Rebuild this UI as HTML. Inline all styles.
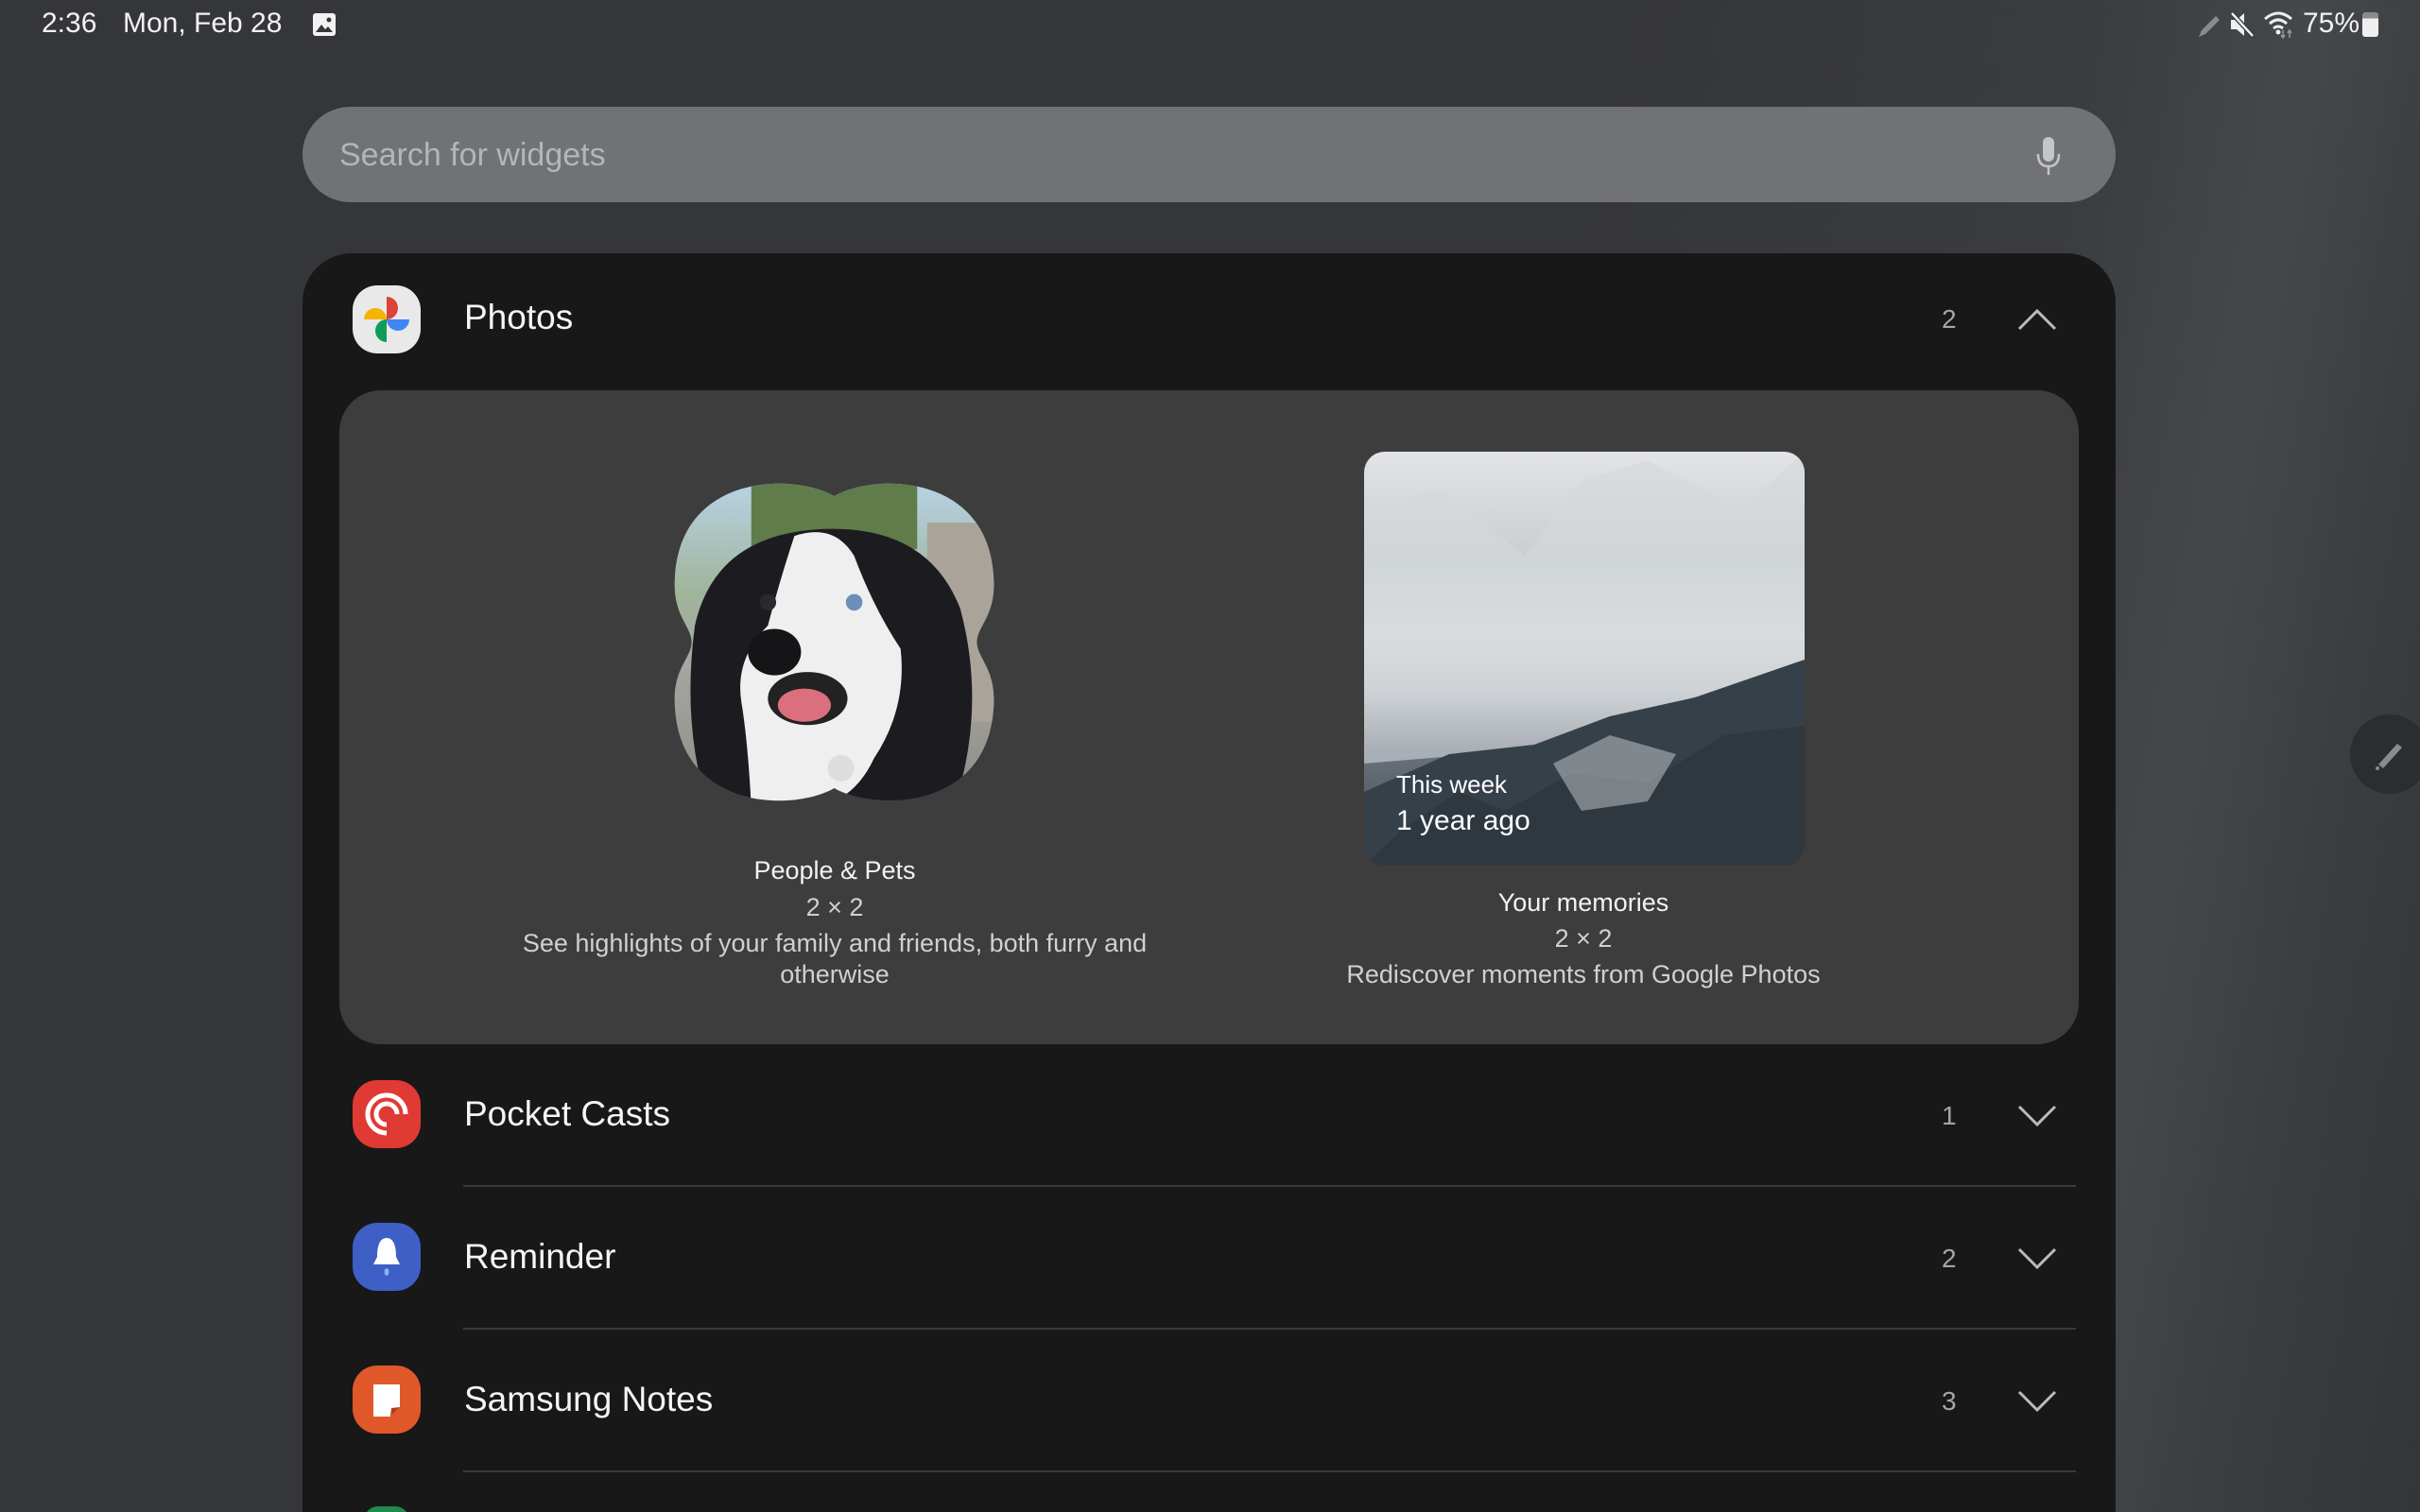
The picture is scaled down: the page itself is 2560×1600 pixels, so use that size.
<!DOCTYPE html>
<html style="width:2560px;height:1600px;overflow:hidden"><head><meta charset="utf-8"><style>
*{margin:0;padding:0;box-sizing:border-box}
html,body{width:2560px;height:1600px;overflow:hidden}
body{position:relative;font-family:"Liberation Sans",Roboto,sans-serif;
background:linear-gradient(100deg,#35363a 0%,#35363a 60%,#3a3c40 78%,#45484b 86%,#3a3c3f 93%,#333538 100%);}
.abs{position:absolute}
.st{top:8px;font-size:30px;color:#f2f2f2}
.search{left:320px;top:113px;width:1918px;height:101px;border-radius:51px;background:#717275}
.search span{position:absolute;left:39px;top:32px;font-size:34px;color:#b4b5b7}
.card{left:320px;top:268px;width:1918px;height:1400px;border-radius:52px;background:#181818}
.panel{left:359px;top:413px;width:1840px;height:692px;border-radius:44px;background:#3d3d3d}
.name{font-size:37px;color:#f5f5f5}
.cnt{font-size:28px;color:#a5a5a5}
.sep{left:490px;width:1706px;height:2px;background:#3a3a3a}
.lab{font-size:27px;color:#f2f2f2;text-align:center}
.sub{font-size:27px;color:#d0d0d0;text-align:center;line-height:33px}
</style></head><body>
<div class="abs st" style="left:44px">2:36</div>
<div class="abs st" style="left:130px">Mon, Feb 28</div>
<svg class="abs" style="left:329px;top:12px" width="28" height="28" viewBox="0 0 28 28"><rect x="2" y="2" width="24" height="24" rx="3" fill="#f2f2f2"/><path d="M5 22 L11 14 L15 19 L18 16 L23 22Z" fill="#35363a"/><circle cx="19" cy="9" r="2.5" fill="#35363a"/></svg>
<svg class="abs" style="left:2322px;top:12px" width="30" height="30" viewBox="0 0 30 30"><path d="M4 27 L7 20 L22 5 L26 9 L11 24Z" fill="#8a8b8d"/></svg>
<svg class="abs" style="left:2358px;top:10px" width="28" height="32" viewBox="0 0 28 32"><path d="M2 11 H8 L16 4 V28 L8 21 H2Z" fill="#eee"/><path d="M3 4 L25 28" stroke="#35363a" stroke-width="5"/><path d="M3 4 L25 28" stroke="#eee" stroke-width="2.5"/></svg>
<svg class="abs" style="left:2394px;top:10px" width="36" height="32" viewBox="0 0 36 32"><path d="M2 10 Q16 -2 30 10" stroke="#eee" stroke-width="3" fill="none"/><path d="M7 15 Q16 7 25 15" stroke="#eee" stroke-width="3" fill="none"/><path d="M11 20 Q16 16 21 20" stroke="#eee" stroke-width="3" fill="none"/><circle cx="16" cy="24" r="2.5" fill="#eee"/><path d="M21 22 V30 M19 27 L21 30 L23 27 M28 30 V22 M26 25 L28 22 L30 25" stroke="#999" stroke-width="1.5" fill="none"/></svg>
<div class="abs st" style="left:2436px">75%</div>
<div class="abs" style="left:2499px;top:13px;width:17px;height:26px;border-radius:3px;background:linear-gradient(#8a8a8a 0 25%,#eee 25%)"></div>

<div class="abs search"><span>Search for widgets</span>
<svg class="abs" style="left:1832px;top:30px" width="30" height="44" viewBox="0 0 30 44"><rect x="9" y="2" width="12" height="26" rx="6" fill="#c4c5c7"/><path d="M4 20 Q4 33 15 33 Q26 33 26 20" stroke="#c4c5c7" stroke-width="2.5" fill="none"/><path d="M15 33 V42" stroke="#c4c5c7" stroke-width="2.5"/></svg></div>

<div class="abs card"></div>
<svg class="abs" style="left:373px;top:302px" width="72" height="72" viewBox="0 0 72 72"><rect width="72" height="72" rx="26" fill="#e9e9e9"/>
<path d="M36 36 V12 A12 12 0 0 1 36 36Z" fill="#db4437"/>
<path d="M36 36 H60 A12 12 0 0 1 36 36Z" fill="#4285f4"/>
<path d="M36 36 V60 A12 12 0 0 1 36 36Z" fill="#0f9d58"/>
<path d="M36 36 H12 A12 12 0 0 1 36 36Z" fill="#f4b400"/></svg>
<div class="abs name" style="left:491px;top:315px">Photos</div>
<div class="abs cnt" style="left:2054px;top:322px">2</div>
<svg class="abs" style="left:2133px;top:325px" width="44" height="26" viewBox="0 0 44 26"><path d="M3 23 L22 4 L41 23" stroke="#bbb" stroke-width="3" fill="none"/></svg>

<div class="abs panel"></div>
<svg class="abs" style="left:707px;top:504px" width="351" height="351" viewBox="0 0 100 100">
<defs><clipPath id="cl"><path d="M50,6 C62,-1 96,-1 98,30 C99,42 93,45 93,50 C93,55 99,58 98,70 C96,101 62,101 50,94 C38,101 4,101 2,70 C1,58 7,55 7,50 C7,45 1,42 2,30 C4,-1 38,-1 50,6 Z"/></clipPath>
<linearGradient id="sky" x1="0" y1="0" x2="0" y2="1"><stop offset="0" stop-color="#b9d4ea"/><stop offset="0.35" stop-color="#9fb59a"/><stop offset="0.55" stop-color="#a8a8a2"/><stop offset="1" stop-color="#8b8a86"/></linearGradient></defs>
<g clip-path="url(#cl)">
<rect width="100" height="100" fill="url(#sky)"/>
<rect x="25" y="0" width="50" height="22" fill="#607c4a"/>
<rect x="78" y="14" width="22" height="60" fill="#a9a39a"/>
<path d="M8 45 Q14 18 45 16 Q78 14 88 40 Q96 70 86 100 H12 Q4 75 8 45Z" fill="#1c1c20"/>
<path d="M38 18 Q50 14 56 24 Q62 40 70 52 Q72 70 62 85 Q55 100 40 100 H25 Q24 80 22 68 Q20 55 30 45 Q34 30 38 18Z" fill="#efefef"/>
<ellipse cx="32" cy="53" rx="8" ry="7" fill="#151518"/>
<ellipse cx="42" cy="67" rx="12" ry="8" fill="#222"/>
<ellipse cx="41" cy="69" rx="8" ry="5" fill="#dc6f7d"/>
<circle cx="30" cy="38" r="2.5" fill="#2a2a2e"/><circle cx="56" cy="38" r="2.5" fill="#6c8fb8"/>
<circle cx="52" cy="88" r="4" fill="#ddd"/>
</g></svg>
<div class="abs lab" style="left:483px;top:906px;width:800px">People &amp; Pets</div>
<div class="abs sub" style="left:483px;top:944px;width:800px">2 × 2</div>
<div class="abs sub" style="left:483px;top:982px;width:800px">See highlights of your family and friends, both furry and<br>otherwise</div>

<div class="abs" style="left:1443px;top:478px;width:466px;height:438px;border-radius:22px;overflow:hidden;background:linear-gradient(180deg,#e2e4e6 0%,#c9ced2 25%,#dfe1e3 45%,#c4c8cc 58%,#6a737c 72%,#3e4750 100%)">
<svg class="abs" style="left:0;top:0" width="466" height="438" viewBox="0 0 466 438">
<path d="M0 60 L80 40 L170 110 L230 30 L300 10 L400 60 L466 0 V230 L380 260 L300 300 L200 330 L120 320 L0 330Z" fill="#d4d8dc" opacity=".6"/>
<path d="M0 360 L90 320 L180 310 L260 280 L350 260 L466 220 V438 H0Z" fill="#364049"/>
<path d="M40 400 L100 360 L150 380 L220 340 L300 350 L380 300 L466 290 V438 H0Z" fill="#2c343c" opacity=".7"/>
<path d="M200 330 L260 300 L330 320 L300 370 L230 380Z" fill="#c9cdd1" opacity=".5"/>
</svg>
<div class="abs" style="left:34px;top:337px;font-size:26px;color:#fff">This week</div>
<div class="abs" style="left:34px;top:374px;font-size:30px;color:#fff">1 year ago</div>
</div>
<div class="abs lab" style="left:1275px;top:940px;width:800px">Your memories</div>
<div class="abs sub" style="left:1275px;top:977px;width:800px">2 × 2</div>
<div class="abs sub" style="left:1275px;top:1015px;width:800px">Rediscover moments from Google Photos</div>

<svg class="abs" style="left:373px;top:1143px" width="72" height="72" viewBox="0 0 72 72"><rect width="72" height="72" rx="26" fill="#e03a35"/>
<path d="M36 56 A20 20 0 1 1 56 36" stroke="#fff" stroke-width="5" fill="none"/><path d="M36 47 A11 11 0 1 1 47 36" stroke="#fff" stroke-width="5" fill="none"/></svg>
<div class="abs name" style="left:491px;top:1158px">Pocket Casts</div>
<div class="abs cnt" style="left:2054px;top:1165px">1</div>
<svg class="abs" style="left:2133px;top:1168px" width="44" height="26" viewBox="0 0 44 26"><path d="M3 3 L22 22 L41 3" stroke="#bbb" stroke-width="3" fill="none"/></svg>
<div class="abs sep" style="top:1254px"></div>

<svg class="abs" style="left:373px;top:1294px" width="72" height="72" viewBox="0 0 72 72"><rect width="72" height="72" rx="26" fill="#3e5fc6"/>
<path d="M36 16 C44 16 46 26 46 36 L50 44 H22 L26 36 C26 26 28 16 36 16Z" fill="#fff"/><ellipse cx="36" cy="52" rx="2.5" ry="4" fill="#7fb6ee"/></svg>
<div class="abs name" style="left:491px;top:1309px">Reminder</div>
<div class="abs cnt" style="left:2054px;top:1316px">2</div>
<svg class="abs" style="left:2133px;top:1319px" width="44" height="26" viewBox="0 0 44 26"><path d="M3 3 L22 22 L41 3" stroke="#bbb" stroke-width="3" fill="none"/></svg>
<div class="abs sep" style="top:1405px"></div>

<svg class="abs" style="left:373px;top:1445px" width="72" height="72" viewBox="0 0 72 72"><rect width="72" height="72" rx="26" fill="#e0582a"/>
<path d="M22 20 H50 V44 L40 54 H22 Z" fill="#fff"/><path d="M50 44 L40 54 L41 45Z" fill="#b53c15"/></svg>
<div class="abs name" style="left:491px;top:1460px">Samsung Notes</div>
<div class="abs cnt" style="left:2054px;top:1467px">3</div>
<svg class="abs" style="left:2133px;top:1470px" width="44" height="26" viewBox="0 0 44 26"><path d="M3 3 L22 22 L41 3" stroke="#bbb" stroke-width="3" fill="none"/></svg>
<div class="abs sep" style="top:1556px"></div>
<div class="abs" style="left:385px;top:1594px;width:48px;height:30px;border-radius:24px;background:#1e8a4c"></div>

<div class="abs" style="left:2486px;top:756px;width:84px;height:84px;border-radius:50%;background:#2c2d30"></div>
<svg class="abs" style="left:2508px;top:778px" width="40" height="40" viewBox="0 0 40 40"><path d="M8 31 L28 9 L33 13 L13 35Z" fill="#8a8b8d"/><circle cx="7" cy="35" r="2" fill="#8a8b8d"/></svg>
</body></html>
